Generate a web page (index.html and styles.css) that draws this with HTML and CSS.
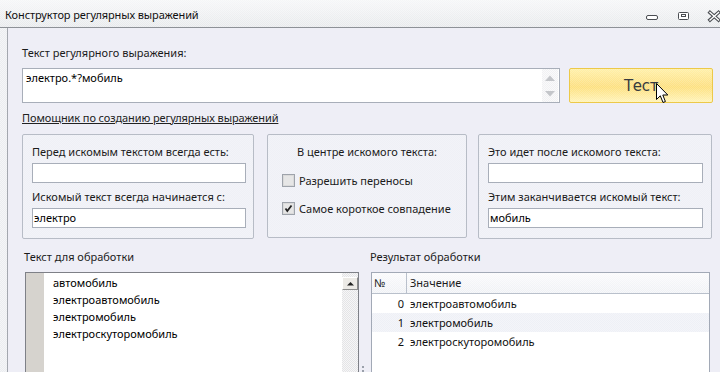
FILE: index.html
```html
<!DOCTYPE html>
<html lang="ru">
<head>
<meta charset="utf-8">
<title>Конструктор регулярных выражений</title>
<link rel="stylesheet" href="styles.css">
</head>
<body>
<div class="window">
  <div class="titlebar">
    <span class="title">Конструктор регулярных выражений</span>
    <svg class="controls" width="80" height="27" viewBox="0 0 80 27">
      <rect x="6.5" y="15.5" width="11" height="4" rx="1.5" fill="#fff" stroke="#4a4d52"/>
      <rect x="38.5" y="12.5" width="10" height="7" rx="1" fill="#fff" stroke="#4a4d52"/>
      <rect x="41.5" y="14.5" width="4" height="2" fill="none" stroke="#4a4d52"/>
      <path d="M70 12.5 L78.5 20 M78.5 12.5 L70 20" stroke="#4a4d52" stroke-width="3.6" stroke-linecap="square"/>
      <path d="M70 12.5 L78.5 20 M78.5 12.5 L70 20" stroke="#fff" stroke-width="1.4" stroke-linecap="square"/>
    </svg>
  </div>
  <div class="frame">
    <div class="panel">
      <div class="lbl">Текст регулярного выражения:</div>
      <div class="regex-row">
        <div class="regex-box">
          <span class="regex-text">электро.*?мобиль</span>
          <div class="mini-scroll">
            <svg width="14" height="6" viewBox="0 0 14 6"><path d="M2 6 L7 0.5 L12 6 Z" fill="#c4c6ca"/></svg>
            <svg width="14" height="6" viewBox="0 0 14 6"><path d="M2 0 L7 5.5 L12 0 Z" fill="#c4c6ca"/></svg>
          </div>
        </div>
        <button class="test-btn">Тест
          <svg class="cursor" width="13" height="21" viewBox="0 0 13 21"><path d="M0.5 0.5 L0.5 16.5 L4.3 12.8 L7 19.5 L9.4 18.5 L6.8 12 L11.8 12 Z" fill="#fff" stroke="#000" stroke-linejoin="round"/></svg>
        </button>
      </div>
      <a class="helper" href="#">Помощник по созданию регулярных выражений</a>
      <div class="groups">
        <div class="group g1">
          <div class="g-lbl">Перед искомым текстом всегда есть:</div>
          <div class="field"></div>
          <div class="g-lbl second">Искомый текст всегда начинается с:</div>
          <div class="field">электро</div>
        </div>
        <div class="group g2">
          <div class="g-title">В центре искомого текста:</div>
          <div class="check first">
            <svg width="13" height="13" viewBox="0 0 13 13"><rect x="0.5" y="0.5" width="12" height="12" fill="#f2f2f2" stroke="#9ea3ab"/><rect x="1.5" y="1.5" width="10" height="10" fill="#e6e6e6" stroke="#dadada"/></svg>
            <span>Разрешить переносы</span>
          </div>
          <div class="check">
            <svg width="13" height="13" viewBox="0 0 13 13"><rect x="0.5" y="0.5" width="12" height="12" fill="#f2f2f2" stroke="#9ea3ab"/><rect x="1.5" y="1.5" width="10" height="10" fill="#e6e6e6" stroke="#dadada"/><path d="M3.5 6.5 L5.3 9 L9.5 3.5" fill="none" stroke="#222" stroke-width="1.8"/></svg>
            <span>Самое короткое совпадение</span>
          </div>
        </div>
        <div class="group g3">
          <div class="g-lbl">Это идет после искомого текста:</div>
          <div class="field"></div>
          <div class="g-lbl second">Этим заканчивается искомый текст:</div>
          <div class="field">мобиль</div>
        </div>
      </div>
      <div class="bottom">
        <div class="col left">
          <div class="b-lbl">Текст для обработки</div>
          <div class="textbox">
            <div class="gutter"></div>
            <div class="lines">
              <div>автомобиль</div>
              <div>электроавтомобиль</div>
              <div>электромобиль</div>
              <div>электроскуторомобиль</div>
            </div>
            <div class="vscroll">
              <div class="vbtn"><svg width="9" height="5" viewBox="0 0 9 5"><path d="M1 4.5 L4.5 1 L8 4.5 Z" fill="#222"/></svg></div>
            </div>
          </div>
        </div>
        <div class="splitter"><i></i><i></i></div>
        <div class="col right">
          <div class="b-lbl">Результат обработки</div>
          <div class="grid">
            <div class="g-head">
              <div class="c-num">№</div>
              <div class="c-val">Значение</div>
            </div>
            <div class="g-row"><div class="c-num">0</div><div class="c-val">электроавтомобиль</div></div>
            <div class="g-row alt"><div class="c-num">1</div><div class="c-val">электромобиль</div></div>
            <div class="g-row"><div class="c-num">2</div><div class="c-val">электроскуторомобиль</div></div>
          </div>
        </div>
      </div>
    </div>
  </div>
</div>
</body>
</html>
```

FILE: styles.css
```css
* { box-sizing: border-box; }
html, body { margin: 0; padding: 0; }
body {
  width: 720px;
  height: 372px;
  overflow: hidden;
  font-family: "Noto Sans", "DejaVu Sans", sans-serif;
  font-size: 11px;
  color: #1b1b1b;
  background: #f1f2f5;
}
.window { width: 720px; height: 372px; display: flex; flex-direction: column; }

.titlebar {
  height: 28px;
  flex: 0 0 28px;
  border-bottom: 1px solid #8d9197;
  background:
    repeating-conic-gradient(rgba(255,255,255,0.35) 0 25%, rgba(0,0,0,0) 0 50%) 0 0 / 2px 2px,
    linear-gradient(#f6f7f8, #e7e9ec);
  display: flex;
  align-items: center;
  justify-content: space-between;
  padding-left: 5px;
  padding-top: 2px;
}
.title { font-size: 11px; color: #111; letter-spacing: -0.1px; }
.controls { display: block; align-self: flex-start; margin-top: -2px; }

.frame {
  flex: 1;
  padding-left: 7px;
  background:
    repeating-conic-gradient(#ebedf0 0 25%, #f4f5f7 0 50%) 0 0 / 2px 2px;
}
.panel {
  height: 100%;
  border-left: 1px solid #a3a7ae;
  background: #eeeef6;
  padding: 18px 7px 0 14px;
}
.lbl { line-height: 14px; height: 14px; }

.regex-row { display: flex; margin-top: 8px; height: 35px; gap: 9px; }
.regex-box {
  width: 538px;
  height: 35px;
  border: 1px solid #a8aeb9;
  background: #fff;
  display: flex;
}
.regex-text { flex: 1; padding: 2px 0 0 3px; line-height: 14px; color: #000; }
.mini-scroll {
  width: 16px;
  margin-right: 1px;
  padding: 6px 0 5px;
  display: flex;
  flex-direction: column;
  justify-content: space-between;
  align-items: center;
  background: repeating-conic-gradient(#f1f1f3 0 25%, #fafafb 0 50%) 0 0 / 2px 2px;
}
.mini-scroll svg { display: block; }

.test-btn {
  position: relative;
  width: 144px;
  height: 35px;
  border: 1px solid #ecc949;
  border-radius: 2px;
  background:
    repeating-conic-gradient(rgba(255,255,255,0.18) 0 25%, rgba(0,0,0,0) 0 50%) 0 0 / 2px 2px,
    linear-gradient(#fff0a8, #fde287 45%, #fde07e 55%, #fff3b8);
  font-family: "DejaVu Sans", sans-serif;
  font-size: 15px;
  color: #353a40;
  padding: 0;
  margin: 0;
  letter-spacing: -0.3px;
}
.cursor { position: absolute; left: 86px; top: 14px; }

.helper {
  display: block;
  margin-top: 8px;
  line-height: 14px;
  height: 14px;
  color: #222;
  text-decoration: underline;
  width: max-content;
  letter-spacing: -0.1px;
}

.groups { display: flex; margin-top: 9px; align-items: flex-start; }
.group {
  height: 105px;
  border: 1px solid #b7bcc6;
  border-radius: 2px;
  background:
    repeating-conic-gradient(#eff0f6 0 25%, #f2f3f8 0 50%) 0 0 / 2px 2px;
}
.g1 { width: 232px; padding: 10px 7px 0 9px; }
.g2 { width: 200px; height: 104px; margin-left: 13px; padding: 10px 8px 0 14px; }
.g3 { width: 234px; margin-left: 11px; padding: 10px 8px 0 9px; }
.g-lbl { line-height: 14px; height: 14px; white-space: nowrap; }
.g-lbl.second { margin-top: 7px; }
.field {
  margin-top: 4px;
  height: 20px;
  border: 1px solid #a8aeb9;
  background: #fff;
  padding-left: 1px;
  line-height: 18px;
  color: #000;
}
.g-title { text-align: center; line-height: 14px; height: 14px; margin-left: -6px; white-space: nowrap; }
.check { display: flex; align-items: center; gap: 4px; height: 13px; margin-top: 15px; white-space: nowrap; }
.check.first { margin-top: 15px; }
.check svg { display: block; flex: 0 0 13px; }

.bottom { display: flex; margin-top: 11px; padding-left: 3px; }
.col { display: flex; flex-direction: column; }
.left { width: 334px; }
.right { width: 339px; }
.b-lbl { line-height: 14px; height: 14px; margin-bottom: 8px; margin-left: -1px; }
.splitter {
  width: 12px;
  display: flex;
  flex-direction: column;
  align-items: center;
  justify-content: flex-end;
  gap: 2px;
  height: 122px;
}
.splitter i { display: block; width: 2px; height: 2px; background: #9aa0aa; margin-left: -4px; }

.textbox {
  height: 110px;
  border: 1px solid #7e8087;
  background: #fff;
  display: flex;
}
.gutter { width: 18px; background: #d6d3ce; }
.lines { flex: 1; padding: 1px 0 0 9px; color: #000; }
.lines div { line-height: 17px; height: 17px; }
.vscroll {
  width: 16px;
  background: repeating-conic-gradient(#e4e4e6 0 25%, #f6f6f7 0 50%) 0 0 / 2px 2px;
  padding-top: 4px;
}
.vbtn {
  width: 16px;
  height: 13px;
  border: 1px solid;
  border-color: #fff #8c8c8c #8c8c8c #fff;
  background: #eceae6;
  display: flex;
  align-items: center;
  justify-content: center;
}
.vbtn svg { display: block; }

.grid {
  height: 110px;
  border: 1px solid #a2a9b6;
  background: #fff;
}
.g-head {
  display: flex;
  height: 21px;
  border-bottom: 1px solid #b9c0cb;
  background:
    repeating-conic-gradient(rgba(255,255,255,0.5) 0 25%, rgba(0,0,0,0) 0 50%) 0 0 / 2px 2px,
    linear-gradient(#f9f9fb, #eef0f4);
  line-height: 20px;
}
.g-head .c-num { width: 35px; padding-left: 2px; border-right: 1px solid #b9c0cb; }
.g-head .c-val { padding-left: 3px; }
.g-row { display: flex; height: 19px; line-height: 19px; color: #111; }
.g-row.alt {
  background: repeating-conic-gradient(#eef0f6 0 25%, #f4f5f9 0 50%) 0 0 / 2px 2px;
}
.g-row .c-num { width: 32px; text-align: right; }
.g-row .c-val { padding-left: 6px; }
```
